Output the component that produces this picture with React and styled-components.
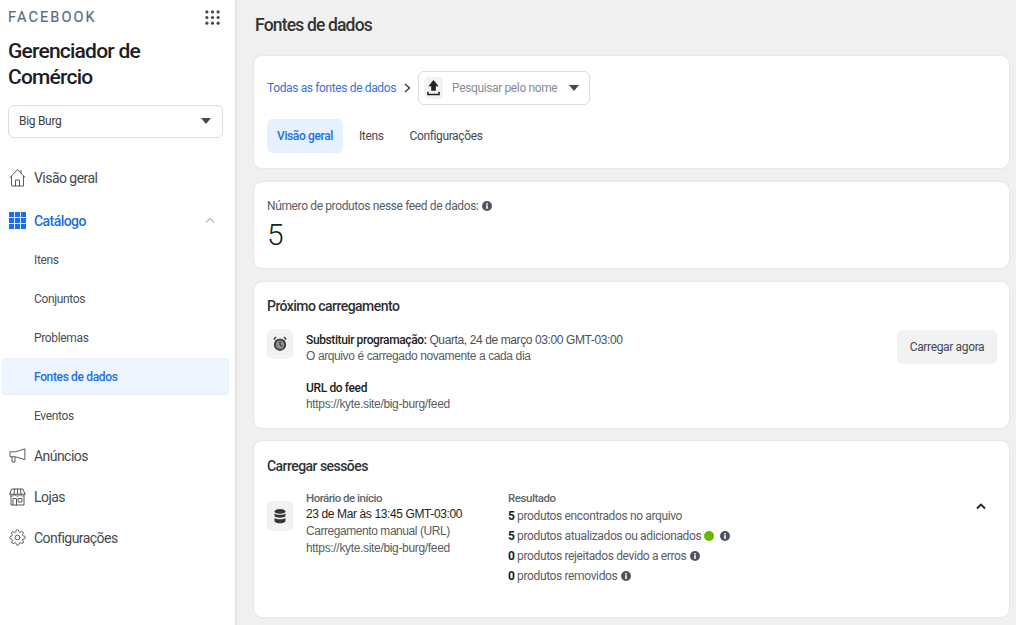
import React from "react";
import styled, { createGlobalStyle } from "styled-components";

const Global = createGlobalStyle`
  html, body { margin: 0; padding: 0; height: 100%; }
  body { font-family: Roboto, "Liberation Sans", sans-serif; background: #f0f0f0; color: #1c1e21; overflow: hidden; }
  #root { height: 625px; }
`;

const Page = styled.div`
  display: flex;
  width: 1016px;
  height: 625px;
  overflow: hidden;
`;

const Sidebar = styled.aside`
  width: 237px;
  height: 625px;
  flex: none;
  box-sizing: border-box;
  background: #fff;
  border-right: 2px solid #e6e6e6;
  padding: 8px 0 0;
`;

const TopRow = styled.div`
  display: flex;
  align-items: center;
  justify-content: space-between;
  padding: 0 15px 0 8px;
  height: 18px;
`;

const Brand = styled.div`
  font-size: 14.5px;
  font-weight: 400;
  letter-spacing: 2.1px;
  color: #5d6c7f;
  -webkit-text-stroke: 0.2px #5d6c7f;
`;

const AppTitle = styled.h1`
  margin: 12px 0 0 8px;
  font-size: 21px;
  line-height: 26px;
  font-weight: 500;
  letter-spacing: -0.78px;
  color: #1c1e21;
`;

const Select = styled.div`
  display: flex;
  align-items: center;
  justify-content: space-between;
  box-sizing: border-box;
  height: 33px;
  margin: 15px 12px 0 8px;
  padding: 0 11px 2px 10px;
  border: 1px solid #dadde1;
  border-radius: 6px;
  font-size: 12px;
  letter-spacing: -0.3px;
  color: #3c3f44;
`;

const Caret = styled.span`
  width: 0;
  height: 0;
  border-left: 5.5px solid transparent;
  border-right: 5.5px solid transparent;
  border-top: 6px solid #444950;
`;

const Nav = styled.nav`
  margin-top: 19px;
  display: flex;
  flex-direction: column;
`;

const MainItem = styled.div`
  display: flex;
  align-items: center;
  gap: 8px;
  height: 41px;
  margin: ${(p) => (p.$active ? "2px 0 -1px" : "0")};
  padding: 0 20px 0 9px;
  font-size: 14px;
  letter-spacing: -0.55px;
  font-weight: ${(p) => (p.$active ? 500 : 400)};
  color: ${(p) => (p.$active ? "#1a6ee8" : "#444950")};
  & > span:not([data-icon]) { flex: 1; }
`;

const SubItem = styled.div`
  display: flex;
  align-items: center;
  box-sizing: border-box;
  height: 37px;
  margin: 1px 6px 1px 2px;
  padding-left: 31px;
  border-radius: 3px;
  font-size: 12px;
  letter-spacing: -0.35px;
  font-weight: ${(p) => (p.$active ? 500 : 400)};
  color: ${(p) => (p.$active ? "#1a6ee8" : "#4b4f56")};
  background: ${(p) => (p.$active ? "#eef5ff" : "transparent")};
  border: 1px solid ${(p) => (p.$active ? "#e4eefb" : "transparent")};
`;

const Main = styled.main`
  flex: 1;
  min-width: 0;
  padding: 0 7px 0 17px;
`;

const PageTitle = styled.h2`
  margin: 0;
  height: 56px;
  box-sizing: border-box;
  padding: 14px 0 0 1px;
  font-size: 17.5px;
  line-height: 22px;
  font-weight: 500;
  letter-spacing: -0.83px;
  color: #333;
`;

const Card = styled.section`
  box-sizing: border-box;
  height: ${(p) => p.$h}px;
  margin-bottom: ${(p) => p.$mb ?? 14}px;
  background: #fff;
  border-radius: 8px;
  box-shadow: 0 0 2px rgba(0, 0, 0, 0.14);
  padding: ${(p) => p.$pad || "0 13px"};
`;

const Crumbs = styled.div`
  display: flex;
  align-items: center;
  height: 34px;
  font-size: 12px;
  letter-spacing: -0.37px;
`;

const CrumbLink = styled.span`
  color: #3b73d1;
`;

const CrumbArrow = styled.span`
  display: inline-flex;
  margin-left: 8px;
`;

const Picker = styled.div`
  display: flex;
  align-items: center;
  box-sizing: border-box;
  width: 172px;
  height: 34px;
  margin-left: 7px;
  padding: 0 10px 0 5px;
  border: 1px solid #dadde1;
  border-radius: 6px;
  font-size: 12px;
  color: #8d8d94;
`;

const IconTile = styled.span`
  display: flex;
  align-items: center;
  justify-content: center;
  flex: none;
  width: ${(p) => p.$w || 26}px;
  height: ${(p) => p.$h || 30}px;
  margin-top: ${(p) => p.$mt || 0}px;
  background: #f2f2f2;
  border-radius: 5px;
  color: #333;
`;

const PickerText = styled.span`
  flex: 1;
  margin-left: 9px;
`;

const Tabs = styled.div`
  display: flex;
  margin-top: 14px;
`;

const Tab = styled.div`
  display: flex;
  align-items: center;
  height: 34px;
  padding: 0 10px;
  margin-right: ${(p) => p.$mr || 0}px;
  border-radius: 5px;
  font-size: 12px;
  letter-spacing: -0.37px;
  font-weight: ${(p) => (p.$active ? 500 : 400)};
  color: ${(p) => (p.$active ? "#1a6ee8" : "#444950")};
  background: ${(p) => (p.$active ? "#e7f1fd" : "transparent")};
`;

const Line = styled.div`
  display: flex;
  align-items: center;
  gap: ${(p) => p.$gap ?? 0}px;
  font-size: ${(p) => p.$fs || 12}px;
  font-family: ${(p) => (p.$arial ? '"Liberation Sans", Arial, sans-serif' : "inherit")};
  letter-spacing: ${(p) => p.$ls ?? -0.37}px;
  line-height: ${(p) => p.$lh || 16}px;
  font-weight: ${(p) => p.$fw || 400};
  color: ${(p) => p.$color || "#5a5d63"};
  white-space: pre;
  margin-top: ${(p) => p.$mt || 0}px;
`;

const ArialText = styled.span`
  font-family: "Liberation Sans", Arial, sans-serif;
  color: #4b4f56;
`;

const BigNumber = styled.div`
  font-size: 30px;
  line-height: 36px;
  font-weight: 300;
  margin-top: 3px;
  color: #1c1e21;
`;

const SectionTitle = styled.h3`
  margin: 0;
  font-size: 14px;
  line-height: 18px;
  font-weight: 500;
  letter-spacing: -0.55px;
  color: #2f3136;
`;

const Row = styled.div`
  display: flex;
  align-items: flex-start;
  margin-top: ${(p) => p.$mt || 0}px;
`;

const Body = styled.div`
  flex: ${(p) => (p.$grow ? 1 : "none")};
  width: ${(p) => (p.$w ? p.$w + "px" : "auto")};
  margin-left: ${(p) => p.$ml || 0}px;
  padding-top: ${(p) => p.$pt || 0}px;
`;

const Button = styled.button`
  flex: none;
  width: 100px;
  height: 34px;
  margin-top: 1px;
  border: 0;
  border-radius: 6px;
  background: #f2f2f2;
  font: 400 12px Roboto, sans-serif;
  letter-spacing: -0.35px;
  color: #444950;
`;

const Strong = styled.b`
  font-weight: ${(p) => p.$fw || 700};
  color: #1c1e21;
`;

const Dot = styled.span`
  width: 10px;
  height: 10px;
  border-radius: 50%;
  background: #63b800;
`;

const CollapseToggle = styled.span`
  margin: 5px 10px 0 0;
`;

const Info = ({ ml = 0 }) => (
  <svg width="10" height="10" viewBox="0 0 10 10" style={{ marginLeft: ml }}>
    <circle cx="5" cy="5" r="5" fill="#4f5560" />
    <rect x="4.2" y="4.2" width="1.6" height="3.6" fill="#fff" />
    <rect x="4.2" y="2.1" width="1.6" height="1.5" fill="#fff" />
  </svg>
);

const Grid9 = ({ c = "#444", size = 16, dot }) => (
  <svg width={size} height={size} viewBox="0 0 16 16" fill={c}>
    {[0, 1, 2].flatMap((r) =>
      [0, 1, 2].map((k) =>
        dot ? (
          <circle key={`${r}${k}`} cx={2 + k * 6} cy={2 + r * 6} r="1.7" />
        ) : (
          <rect key={`${r}${k}`} x={k * 5.6} y={r * 5.6} width="4.8" height="4.8" />
        )
      )
    )}
  </svg>
);

const IconBox = styled.span`
  display: inline-flex;
  width: 17px;
  justify-content: center;
  flex: none;
`;

const stroke = { fill: "none", stroke: "#555a61", strokeWidth: 1, strokeLinejoin: "round", strokeLinecap: "round" };

const HomeIcon = () => (
  <svg width="17" height="19" viewBox="0 0 17 19" {...stroke}>
    <path d="M1 9.5 8.5 1.5 16 9.5M2.5 8.5V18H14.5V8.5M6.5 18V12H10.5V18M12 2.5V5" />
  </svg>
);
const MegaIcon = () => (
  <svg width="17" height="15" viewBox="0 0 17 15" {...stroke}>
    <path d="M15.5 1 6.5 3.8H1V8.8H6.5L15.5 11.5ZM3 9V14H6V9.2" />
  </svg>
);
const StoreIcon = () => (
  <svg width="17" height="18" viewBox="0 0 17 18" {...stroke}>
    <path d="M3 1H14L16 6.2H1ZM1 6.2C1 8.6 5.5 8.6 5.7 6.2 5.9 8.6 11 8.6 11.2 6.2 11.4 8.6 16 8.6 16 6.2M2 8V17H15V8M4 17V10.5H7.5V17M9.5 10.5H13V14H9.5ZM5.5 1 5 6M8.5 1V6M11.5 1 12 6" />
  </svg>
);
const GearIcon = () => (
  <svg width="17" height="17" viewBox="0 0 24 24" {...stroke} strokeWidth="1.4">
    <circle cx="12" cy="12" r="3.4" />
    <path d="M19.4 15a1.65 1.65 0 0 0 .33 1.82l.06.06a2 2 0 1 1-2.83 2.83l-.06-.06a1.65 1.65 0 0 0-2.8 1.17V21a2 2 0 0 1-4 0v-.09a1.65 1.65 0 0 0-2.82-1.11l-.06.06a2 2 0 1 1-2.83-2.83l.06-.06a1.65 1.65 0 0 0-1.17-2.8H3a2 2 0 0 1 0-4h.09a1.65 1.65 0 0 0 1.11-2.82l-.06-.06a2 2 0 1 1 2.83-2.83l.06.06a1.65 1.65 0 0 0 2.8-1.17V3a2 2 0 0 1 4 0v.09a1.65 1.65 0 0 0 2.82 1.11l.06-.06a2 2 0 1 1 2.83 2.83l-.06.06a1.65 1.65 0 0 0 1.17 2.8H21a2 2 0 0 1 0 4h-.09a1.65 1.65 0 0 0-1.51 1z" />
  </svg>
);
const ChevronUp = ({ c, w = 1.5 }) => (
  <svg width="10" height="7" viewBox="0 0 10 7" fill="none" stroke={c} strokeWidth={w}>
    <path d="M1 5.5 5 1.5 9 5.5" />
  </svg>
);
const ChevronRight = () => (
  <svg width="7" height="10" viewBox="0 0 7 10" fill="none" stroke="#333" strokeWidth="1.3">
    <path d="M1 1 5.5 5 1 9" />
  </svg>
);
const UploadIcon = () => (
  <svg width="13" height="16" viewBox="0 0 14 17" fill="#222">
    <path d="M7 0 12.5 6.5H9.5V11.5H4.5V6.5H1.5Z" />
    <path d="M1 12.5V15.5H13V12.5" fill="none" stroke="#222" strokeWidth="1.6" />
  </svg>
);
const ClockIcon = () => (
  <svg width="14" height="16" viewBox="0 0 14 16">
    <circle cx="7" cy="8.7" r="6.2" fill="#444" />
    <circle cx="7" cy="8.7" r="4.2" fill="#8d8d8d" />
    <path d="M7 5.8V8.9L9 10.2" fill="none" stroke="#222" strokeWidth="1" />
    <path d="M0.8 3.6 3 1M13.2 3.6 11 1" stroke="#444" strokeWidth="1.6" />
  </svg>
);
const DbIcon = () => (
  <svg width="12" height="15" viewBox="0 0 12 15" fill="#333">
    <ellipse cx="6" cy="2.4" rx="5.5" ry="2.3" />
    <path d="M.5 4.2C2 6.4 10 6.4 11.5 4.2V7C10 9.2 2 9.2 .5 7ZM.5 8.7C2 10.9 10 10.9 11.5 8.7V12.3C10 15 2 15 .5 12.3Z" />
  </svg>
);

export default function App() {
  return (
    <Page>
      <Global />
      <Sidebar>
        <TopRow>
          <Brand>FACEBOOK</Brand>
          <Grid9 c="#444950" size={15} dot />
        </TopRow>
        <AppTitle>Gerenciador de<br />Comércio</AppTitle>
        <Select>Big Burg<Caret /></Select>
        <Nav>
          <MainItem><IconBox data-icon><HomeIcon /></IconBox><span>Visão geral</span></MainItem>
          <MainItem $active>
            <IconBox data-icon><Grid9 c="#1a6ee8" size={17} /></IconBox>
            <span>Catálogo</span>
            <ChevronUp c="#bcc0c4" />
          </MainItem>
          <SubItem>Itens</SubItem>
          <SubItem>Conjuntos</SubItem>
          <SubItem>Problemas</SubItem>
          <SubItem $active>Fontes de dados</SubItem>
          <SubItem>Eventos</SubItem>
          <MainItem><IconBox data-icon><MegaIcon /></IconBox><span>Anúncios</span></MainItem>
          <MainItem><IconBox data-icon><StoreIcon /></IconBox><span>Lojas</span></MainItem>
          <MainItem><IconBox data-icon><GearIcon /></IconBox><span>Configurações</span></MainItem>
        </Nav>
      </Sidebar>
      <Main>
        <PageTitle>Fontes de dados</PageTitle>
        <Card $h={112} $pad="15px 13px 0">
          <Crumbs>
            <CrumbLink>Todas as fontes de dados</CrumbLink>
            <CrumbArrow><ChevronRight /></CrumbArrow>
            <Picker>
              <IconTile $w={19} $h={22}><UploadIcon /></IconTile>
              <PickerText>Pesquisar pelo nome</PickerText>
              <Caret />
            </Picker>
          </Crumbs>
          <Tabs>
            <Tab $active $mr={6}>Visão geral</Tab>
            <Tab $mr={6}>Itens</Tab>
            <Tab>Configurações</Tab>
          </Tabs>
        </Card>
        <Card $h={86} $pad="16px 13px 0">
          <Line $gap={3}>Número de produtos nesse feed de dados:<Info /></Line>
          <BigNumber>5</BigNumber>
        </Card>
        <Card $h={146} $mb={13} $pad="15px 12px 0 13px">
          <SectionTitle>Próximo carregamento</SectionTitle>
          <Row $mt={14}>
            <IconTile><ClockIcon /></IconTile>
            <Body $grow $ml={13} $pt={3}>
              <Line $ls={-0.39}><Strong $fw={500}>Substituir programação:</Strong><ArialText> Quarta, 24 de março 03:00 GMT-03:00</ArialText></Line>
              <Line $arial $ls={-0.39}>O arquivo é carregado novamente a cada dia</Line>
              <Line $mt={16} $fw={500} $color="#1c1e21">URL do feed</Line>
              <Line $arial $ls={-0.33}>https://kyte.site/big-burg/feed</Line>
            </Body>
            <Button>Carregar agora</Button>
          </Row>
        </Card>
        <Card $h={176} $mb={0} $pad="16px 13px 0">
          <SectionTitle>Carregar sessões</SectionTitle>
          <Row $mt={15}>
            <IconTile $mt={11}><DbIcon /></IconTile>
            <Body $w={202} $ml={13}>
              <Line $lh={16} $fs={11.5} $ls={-0.5} $fw={500} $color="#606770">Horário de início</Line>
              <Line $arial $ls={-0.38} $lh={17} $color="#1c1e21">23 de Mar às 13:45 GMT-03:00</Line>
              <Line $arial $ls={-0.44} $lh={17}>Carregamento manual (URL)</Line>
              <Line $arial $ls={-0.33} $lh={16}>https://kyte.site/big-burg/feed</Line>
            </Body>
            <Body $grow>
              <Line $lh={16} $fs={11.5} $ls={-0.45} $fw={500} $color="#606770">Resultado</Line>
              <Line $lh={20}><Strong>5</Strong> produtos encontrados no arquivo</Line>
              <Line $lh={20} $gap={3}><span><Strong>5</Strong> produtos atualizados ou adicionados</span><Dot /><Info ml={3} /></Line>
              <Line $lh={20} $gap={4}><span><Strong>0</Strong> produtos rejeitados devido a erros</span><Info /></Line>
              <Line $lh={20} $gap={4}><span><Strong>0</Strong> produtos removidos</span><Info /></Line>
            </Body>
            <CollapseToggle><ChevronUp c="#222" w={1.8} /></CollapseToggle>
          </Row>
        </Card>
      </Main>
    </Page>
  );
}
